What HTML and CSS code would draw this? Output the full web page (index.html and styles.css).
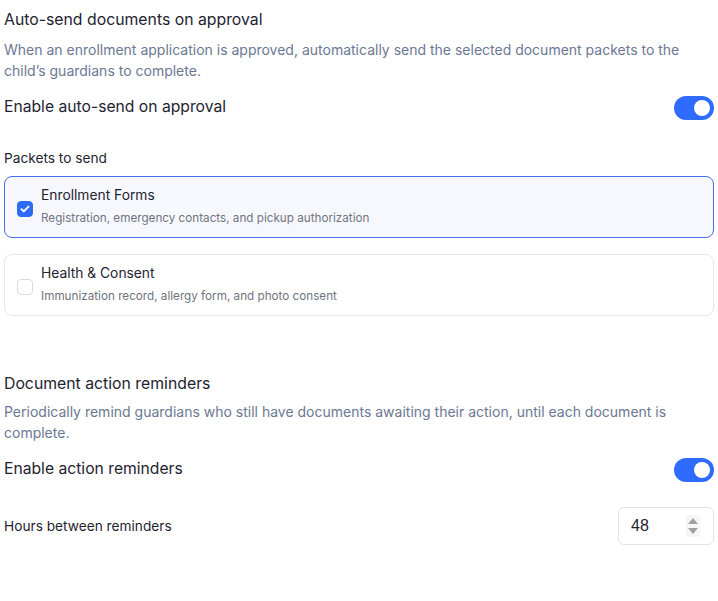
FILE: index.html
```html
<!DOCTYPE html>
<html lang="en">
<head>
    <meta charset="UTF-8">
    <meta name="viewport" content="width=device-width, initial-scale=1.0">
    <title>Document settings</title>
    <link rel="stylesheet" href="styles.css">
</head>
<body>
    <div class="page">
        <section class="setting">
            <h2 class="setting-title">Auto-send documents on approval</h2>
            <p class="setting-desc">When an enrollment application is approved, automatically send the selected document packets to the child’s guardians to complete.</p>
            <div class="toggle-row">
                <span class="toggle-label">Enable auto-send on approval</span>
                <label class="switch"><input type="checkbox" checked><span class="slider"></span></label>
            </div>
            <div class="field-label">Packets to send</div>
            <label class="packet selected">
                <input type="checkbox" class="packet-check" checked>
                <span class="packet-text">
                    <span class="packet-name">Enrollment Forms</span>
                    <span class="packet-sub">Registration, emergency contacts, and pickup authorization</span>
                </span>
            </label>
            <label class="packet">
                <input type="checkbox" class="packet-check">
                <span class="packet-text">
                    <span class="packet-name">Health &amp; Consent</span>
                    <span class="packet-sub">Immunization record, allergy form, and photo consent</span>
                </span>
            </label>
        </section>

        <section class="setting second">
            <h2 class="setting-title">Document action reminders</h2>
            <p class="setting-desc">Periodically remind guardians who still have documents awaiting their action, until each document is complete.</p>
            <div class="toggle-row">
                <span class="toggle-label">Enable action reminders</span>
                <label class="switch"><input type="checkbox" checked><span class="slider"></span></label>
            </div>
            <div class="hours-row">
                <span class="field-label inline">Hours between reminders</span>
                <div class="number-box">
                    <input type="number" class="hours-input" value="48" min="1">
                    <span class="spinner"><span class="up"></span><span class="down"></span></span>
                </div>
            </div>
        </section>
    </div>
</body>
</html>
```

FILE: styles.css
```css
body {
    margin: 0;
    font-family: Inter, "Noto Sans", sans-serif;
    color: #1e2330;
    background: #fff;
}
.page {
    padding: 8px 4px;
}
.setting-title {
    margin: 0;
    font-size: 15.8px;
    font-weight: 400;
    line-height: 24px;
}
.setting-desc {
    margin: 8px 0 0;
    font-size: 14px;
    line-height: 20.5px;
    color: #6b7894;
}
.toggle-row {
    display: flex;
    align-items: center;
    justify-content: space-between;
    margin-top: 15px;
    height: 24px;
}
.toggle-label {
    font-size: 15.7px;
    line-height: 22px;
    padding-bottom: 2px;
}
.switch {
    position: relative;
    width: 40px;
    height: 24px;
}
.switch input {
    display: none;
}
.slider {
    position: absolute;
    inset: 0;
    border-radius: 12px;
    background: #2f6bff;
}
.slider::after {
    content: "";
    position: absolute;
    top: 4px;
    right: 4px;
    width: 16px;
    height: 16px;
    border-radius: 50%;
    background: #fff;
}
.field-label {
    margin-top: 27px;
    font-size: 13.7px;
    line-height: 22px;
}
.field-label.inline {
    margin-top: 0;
}
.packet {
    display: flex;
    align-items: flex-start;
    gap: 8px;
    margin-top: 7px;
    padding: 8px 12px 11px;
    border: 1px solid #e6e8ec;
    border-radius: 8px;
}
.packet + .packet {
    margin-top: 16px;
}
.packet.selected {
    border-color: #4a6cf0;
    background: #f7f8fe;
}
.packet-check {
    appearance: none;
    flex: none;
    width: 16px;
    height: 16px;
    margin: 16px 0 0;
    border: 1px solid #d9dce2;
    border-radius: 4px;
    background: #fff;
}
.packet-check:checked {
    border-color: #2d6af5;
    background: #2d6af5 url("data:image/svg+xml,%3Csvg xmlns='http://www.w3.org/2000/svg' viewBox='0 0 16 16'%3E%3Cpath d='M4.5 8.2l2.3 2.2 4.7-4.8' fill='none' stroke='white' stroke-width='2' stroke-linecap='round' stroke-linejoin='round'/%3E%3C/svg%3E") center / 16px no-repeat;
}
.packet-text {
    display: flex;
    flex-direction: column;
    gap: 5px;
}
.packet-name {
    font-size: 13.8px;
    line-height: 20px;
}
.packet-sub {
    font-size: 11.7px;
    line-height: 16px;
    color: #6f7480;
}
.second {
    margin-top: 56px;
}
.second .setting-desc {
    margin-top: 6px;
}
.second .toggle-row {
    margin-top: 15px;
}
.hours-row {
    display: flex;
    align-items: center;
    justify-content: space-between;
    margin-top: 25px;
}
.number-box {
    position: relative;
}
.hours-input {
    display: block;
    box-sizing: border-box;
    width: 96px;
    height: 38px;
    padding: 0 12px;
    border: 1px solid #e2e4e8;
    border-radius: 6px;
    font-family: "Liberation Sans", Arial, sans-serif;
    font-size: 16px;
    color: #1e2330;
    appearance: textfield;
}
.hours-input::-webkit-inner-spin-button,
.hours-input::-webkit-outer-spin-button {
    -webkit-appearance: none;
    margin: 0;
}
.spinner {
    position: absolute;
    top: 8px;
    right: 14px;
    width: 14px;
    height: 22px;
    background: #f6f6f6;
}
.spinner .up,
.spinner .down {
    position: absolute;
    left: 2px;
    width: 0;
    height: 0;
    border-left: 5px solid transparent;
    border-right: 5px solid transparent;
}
.spinner .up {
    top: 3px;
    border-bottom: 6px solid #a0a0a0;
}
.spinner .down {
    bottom: 3px;
    border-top: 6px solid #a0a0a0;
}
```
